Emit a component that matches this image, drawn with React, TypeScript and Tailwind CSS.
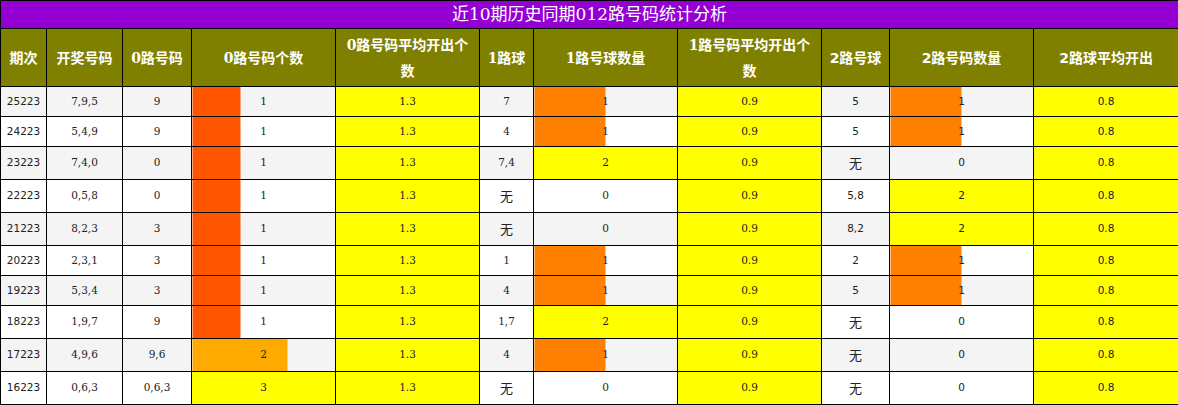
import React from "react";

type Row = {
  issue: string;
  nums: string;
  r0: string;
  c0: number;
  r1: string;
  c1: number;
  r2: string;
  c2: number;
};

const ROWS: Row[] = [
  { issue: "25223", nums: "7,9,5", r0: "9", c0: 1, r1: "7", c1: 1, r2: "5", c2: 1 },
  { issue: "24223", nums: "5,4,9", r0: "9", c0: 1, r1: "4", c1: 1, r2: "5", c2: 1 },
  { issue: "23223", nums: "7,4,0", r0: "0", c0: 1, r1: "7,4", c1: 2, r2: "无", c2: 0 },
  { issue: "22223", nums: "0,5,8", r0: "0", c0: 1, r1: "无", c1: 0, r2: "5,8", c2: 2 },
  { issue: "21223", nums: "8,2,3", r0: "3", c0: 1, r1: "无", c1: 0, r2: "8,2", c2: 2 },
  { issue: "20223", nums: "2,3,1", r0: "3", c0: 1, r1: "1", c1: 1, r2: "2", c2: 1 },
  { issue: "19223", nums: "5,3,4", r0: "3", c0: 1, r1: "4", c1: 1, r2: "5", c2: 1 },
  { issue: "18223", nums: "1,9,7", r0: "9", c0: 1, r1: "1,7", c1: 2, r2: "无", c2: 0 },
  { issue: "17223", nums: "4,9,6", r0: "9,6", c0: 2, r1: "4", c1: 1, r2: "无", c2: 0 },
  { issue: "16223", nums: "0,6,3", r0: "0,6,3", c0: 3, r1: "无", c1: 0, r2: "无", c2: 0 },
];

const WIDTHS = [46, 76, 69, 144, 144, 54, 144, 144, 68, 144, 145];

const HEADERS = [
  "期次",
  "开奖号码",
  "0路号码",
  "0路号码个数",
  "0路号码平均开出个数",
  "1路球",
  "1路号球数量",
  "1路号码平均开出个数",
  "2路号球",
  "2路号码数量",
  "2路球平均开出",
];

const SERIF = "font-['DejaVu_Serif','Noto_Sans_CJK_SC',serif]";
const SANS = "font-['DejaVu_Sans','Noto_Sans_CJK_SC',sans-serif]";

function Value({ v }: { v: string }) {
  if (v === "无") {
    return <span className="font-['Noto_Sans_CJK_SC',sans-serif] text-[13px]">无</span>;
  }
  return <>{v}</>;
}

// bar colour runs from red-orange to yellow as the count reaches max
function barStyle(count: number, max: number): React.CSSProperties | undefined {
  if (count <= 0) return undefined;
  const frac = count / max;
  const g = Math.round(255 * frac);
  const color = `rgb(255, ${g}, 0)`;
  const pct = frac * 100;
  return {
    backgroundImage: `linear-gradient(to right, ${color} ${pct}%, transparent ${pct}%)`,
  };
}

export default function App() {
  const cell = "border border-black text-center align-middle p-0";
  return (
    <div className="w-[1178px] bg-white text-[#222]">
      <table className="w-[1178px] table-fixed border-collapse border border-black">
        <colgroup>
          {WIDTHS.map((w, i) => (
            <col key={i} style={{ width: w }} />
          ))}
        </colgroup>
        <thead>
          <tr>
            <th
              colSpan={11}
              className={`${cell} h-[28px] bg-[#9400d3] text-[17px] font-normal text-white ${SERIF}`}
            >
              近10期历史同期012路号码统计分析
            </th>
          </tr>
          <tr>
            {HEADERS.map((h, i) => (
              <th
                key={h}
                className={`${cell} h-[58px] bg-[#808000] px-[6px] text-[14px] font-bold leading-[26px] text-white ${
                  i >= 8 ? SANS : SERIF
                }`}
              >
                {h}
              </th>
            ))}
          </tr>
        </thead>
        <tbody className="text-[10.5px]">
          {ROWS.map((r, idx) => {
            const tall = [r.r1, r.r2].includes("无");
            const bg = idx % 2 === 0 ? "bg-[#f4f4f4]" : "bg-white";
            const h = tall ? "h-[33px]" : "h-[30px]";
            return (
              <tr key={r.issue} className={bg}>
                <td className={`${cell} ${h} ${SANS}`}>{r.issue}</td>
                <td className={`${cell} ${SERIF}`}>{r.nums}</td>
                <td className={`${cell} ${SERIF}`}>{r.r0}</td>
                <td className={`${cell} ${SERIF}`} style={barStyle(r.c0, 3)}>
                  {r.c0}
                </td>
                <td className={`${cell} ${SERIF} bg-[#ffff00]`}>1.3</td>
                <td className={`${cell} ${SERIF}`}>
                  <Value v={r.r1} />
                </td>
                <td className={`${cell} ${SERIF}`} style={barStyle(r.c1, 2)}>
                  {r.c1}
                </td>
                <td className={`${cell} ${SERIF} bg-[#ffff00]`}>0.9</td>
                <td className={`${cell} ${SANS}`}>
                  <Value v={r.r2} />
                </td>
                <td className={`${cell} ${SANS}`} style={barStyle(r.c2, 2)}>
                  {r.c2}
                </td>
                <td className={`${cell} ${SANS} bg-[#ffff00]`}>0.8</td>
              </tr>
            );
          })}
        </tbody>
      </table>
    </div>
  );
}
